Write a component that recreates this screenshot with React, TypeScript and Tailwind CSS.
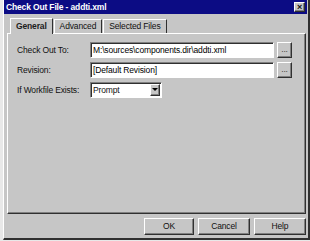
import React from 'react';

const raised =
  'bg-[#c6c6c6] border border-t-white border-l-white border-r-[#303030] border-b-[#303030] shadow-[inset_-1px_-1px_0_#808080]';
const sunken =
  'bg-white border border-t-[#808080] border-l-[#808080] border-r-white border-b-white shadow-[inset_1px_1px_0_#303030]';

const Field = ({ value }: { value: string }) => (
  <div className={`${sunken} w-[184px] h-[16px] flex items-center px-[2px] text-black`}>{value}</div>
);

const Browse = () => (
  <div className={`${raised} w-[15px] h-[16px] ml-[3px] flex items-center justify-center text-[#404040] leading-none pb-[2px]`}>
    ...
  </div>
);

const App = () => {
  return (
    <div className="w-[310px] h-[241px] bg-[#e8e8e8] pl-[3px] font-['Liberation_Sans',Arial,sans-serif] text-[8.5px] tracking-[-0.15px] text-[#101010]">
      {/* Window */}
      <div className="w-[307px] h-[240px] bg-[#c6c6c6] border-l border-l-white border-r-2 border-r-[#303030] border-b-2 border-b-[#303030] flex flex-col">
        {/* Title bar */}
        <div className="h-[14px] mr-[1px] bg-[#0c0c84] flex items-center pl-[2px] pr-[2px]">
          <span className="text-white font-bold">Check Out File - addti.xml</span>
          <div className={`${raised} ml-auto w-[11px] h-[10px] flex items-center justify-center text-[9px] font-bold leading-none`}>
            ×
          </div>
        </div>

        {/* Tabs */}
        <div className="flex items-end h-[19px] pl-[6px]">
          <div className="h-[16px] px-[5px] flex items-center bg-[#c6c6c6] border-t border-l border-white border-r border-r-[#303030] -mb-px relative z-10 font-bold text-[#202020]">
            General
          </div>
          <div className="h-[14px] px-[5px] flex items-center border-t border-l border-white border-r border-r-[#303030] ml-px">
            Advanced
          </div>
          <div className="h-[14px] px-[5px] flex items-center border-t border-l border-white border-r border-r-[#303030] ml-px">
            Selected Files
          </div>
        </div>

        {/* Panel */}
        <div className="ml-[3px] mr-[2px] h-[181px] border border-t-white border-l-white border-r-[#303030] border-b-[#303030] shadow-[inset_-1px_-1px_0_#808080] pt-[8px] pl-[9px] flex flex-col gap-[4px]">
          <div className="flex items-center">
            <span className="w-[73px]">Check Out To:</span>
            <Field value="M:\sources\components.dir\addti.xml" />
            <Browse />
          </div>
          <div className="flex items-center">
            <span className="w-[73px]">Revision:</span>
            <Field value="[Default Revision]" />
            <Browse />
          </div>
          <div className="flex items-center">
            <span className="w-[73px]">If Workfile Exists:</span>
            <div className={`${sunken} w-[72px] h-[16px] flex items-center pl-[2px] pr-[1px]`}>
              <span className="flex-1">Prompt</span>
              <div className={`${raised} w-[10px] h-[12px] flex items-center justify-center`}>
                <svg width="6" height="4" viewBox="0 0 6 4">
                  <path d="M0 0h6L3 3z" fill="#000" />
                </svg>
              </div>
            </div>
          </div>
        </div>

        {/* Buttons */}
        <div className="flex justify-end gap-[4px] pr-[2px] mt-[4px]">
          <div className={`${raised} w-[50px] h-[17px] flex items-center justify-center`}>OK</div>
          <div className={`${raised} w-[52px] h-[17px] flex items-center justify-center`}>Cancel</div>
          <div className={`${raised} w-[52px] h-[17px] flex items-center justify-center`}>Help</div>
        </div>
      </div>
    </div>
  );
};

export default App;
